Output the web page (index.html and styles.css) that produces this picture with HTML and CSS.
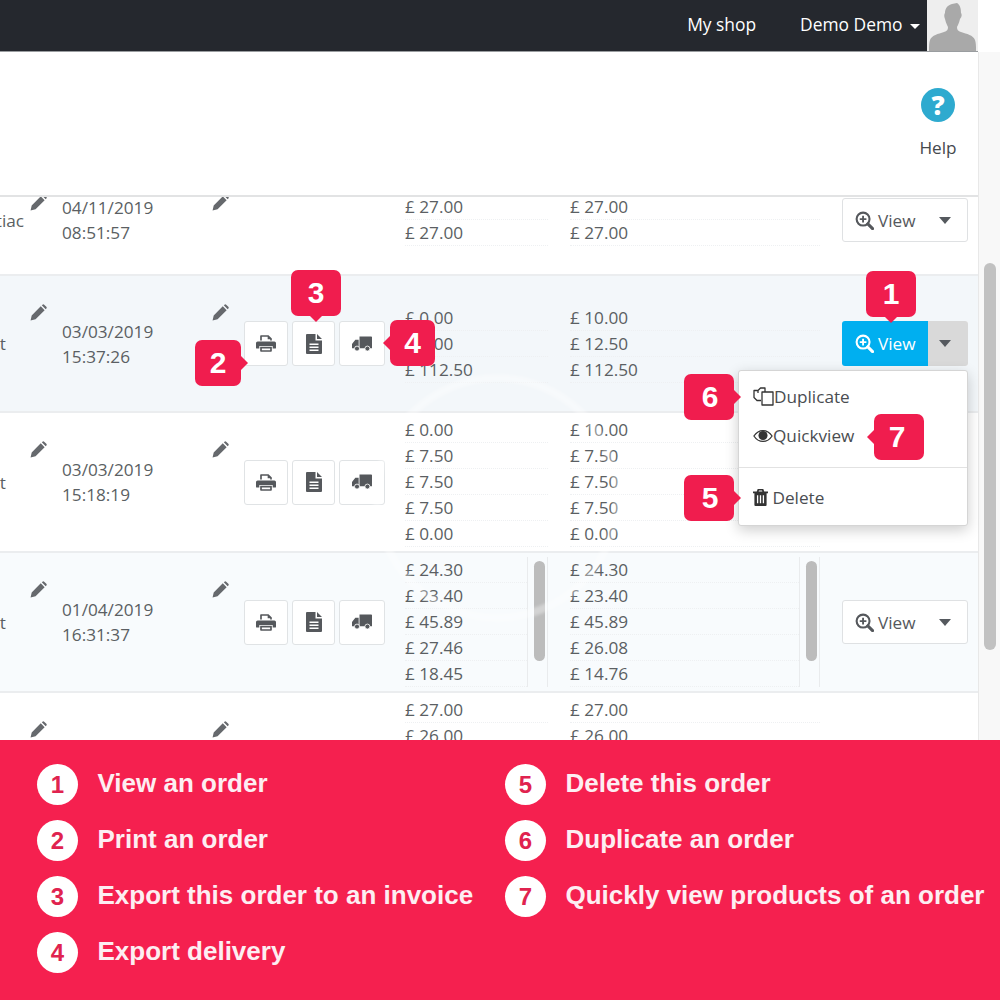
FILE: index.html
```html
<!DOCTYPE html>
<html lang="en">
<head>
    <meta charset="UTF-8">
    <title>Orders</title>
    <link rel="stylesheet" href="styles.css">
</head>
<body>
    <svg class="sprite" xmlns="http://www.w3.org/2000/svg">
        <symbol id="i-pencil" viewBox="0 0 18 18"><path d="M.6 17.4l1.2-5.3 9.6-9.6 4.1 4.1-9.6 9.6zM12.5 1.4l.7-.7a1.3 1.3 0 0 1 1.8 0l2.3 2.3a1.3 1.3 0 0 1 0 1.8l-.7.7z"/></symbol>
        <symbol id="i-print" viewBox="0 0 24 20"><path fill-rule="evenodd" d="M2 7.500h20a2 2 0 0 1 2 2V15a1 1 0 0 1-1 1h-3v-3H4v3H1a1 1 0 0 1-1-1V9.500a2 2 0 0 1 2-2zM5 6.500V1a1 1 0 0 1 1-1h9l4 4v2.500h-2V5h-3V2H7v4.500zM5 14h14v5a1 1 0 0 1-1 1H6a1 1 0 0 1-1-1zM7 16v2h10v-2z"/></symbol>
        <symbol id="i-doc" viewBox="0 0 16 20"><path fill-rule="evenodd" d="M1 0h8.500v6.500H16V19a1 1 0 0 1-1 1H1a1 1 0 0 1-1-1V1a1 1 0 0 1 1-1zM3.500 9.500v1.500h9V9.500zM3.500 12.500V14h9v-1.500zM3.500 15.500V17h9v-1.500zM11 0l5 5h-5z"/></symbol>
        <symbol id="i-truck" viewBox="0 0 24 18"><path d="M9 0h14a1 1 0 0 1 1 1v13H9zM8 4v10H0V9l4-5z"/><circle cx="6" cy="14.500" r="3" stroke="#fff" stroke-width="1"/><circle cx="18.500" cy="14.500" r="3" stroke="#fff" stroke-width="1"/></symbol>
        <symbol id="i-zoom" viewBox="0 0 20 20"><circle cx="8.500" cy="8.500" r="6.800" fill="none" stroke="currentColor" stroke-width="2.200"/><path d="M8.500 5v7M5 8.500h7" stroke="currentColor" stroke-width="2" fill="none"/><path d="M13.500 13.500l5 5" stroke="currentColor" stroke-width="3.200" stroke-linecap="round" fill="none"/></symbol>
        <symbol id="i-copy" viewBox="0 0 21 19"><path d="M5 6V3.500L7.500 1H12v4M5 3.500H1v7l3 3h4M9 5h11v13H9z" fill="none" stroke="currentColor" stroke-width="1.300" stroke-linejoin="round"/></symbol>
        <symbol id="i-eye" viewBox="0 0 22 14"><path d="M1 7c2.500-3.800 6-6 10-6s7.500 2.200 10 6c-2.500 3.800-6 6-10 6S3.500 10.800 1 7z" fill="none" stroke="currentColor" stroke-width="1.400"/><circle cx="11" cy="6.500" r="5" fill="currentColor"/></symbol>
        <symbol id="i-trash" viewBox="0 0 16 18"><path fill-rule="evenodd" d="M5 0h6l1 2.500h4V4.500h-1.500V17a1 1 0 0 1-1 1h-11a1 1 0 0 1-1-1V4.500H0v-2h4zM6 2.500h4L9.600 1.500H6.400zM4.200 6.500v8.500h1.400V6.500zM7.300 6.500v8.500h1.400V6.500zM10.400 6.500v8.500h1.400V6.500z"/></symbol>
    </svg>

    <div class="page">
        <!-- top bar -->
        <header class="topbar">
            <a class="nav-link">My shop</a>
            <a class="nav-link nav-user">Demo Demo <span class="caret caret-white"></span></a>
            <div class="avatar">
                <svg width="51" height="51" viewBox="0 0 51 51"><path fill="#a9a9a9" d="M18 13c0-5 3-8 7-9l5-1c3 2 4 5 4 10 1 1 1 4-1 6-1 4-2 6-3 8 0 3 1 4 4 5 6 2 12 3 14 8 1 3 1 6 1 11H2c0-5 0-8 1-11 2-5 8-6 14-8 3-1 4-2 4-5-1-2-2-4-3-8-1-2-1-5 0-6z"/></svg>
            </div>
        </header>

        <div class="main">
            <div class="content">
                <div class="toolbar">
                    <div class="help">
                        <span class="help-icon">?</span>
                        <span class="help-label">Help</span>
                    </div>
                </div>

                <div class="table">
                    <!-- row 0 -->
                    <div class="row row-first">
                        <div class="cell-name"><span class="name-text name-long">Pontiac</span><svg class="pencil"><use href="#i-pencil"/></svg></div>
                        <div class="cell-date"><div>04/11/2019<br>08:51:57</div><svg class="pencil"><use href="#i-pencil"/></svg></div>
                        <div></div>
                        <div class="prices"><ul class="lines"><li>£ 27.00</li><li>£ 27.00</li></ul></div>
                        <div class="prices"><ul class="lines"><li>£ 27.00</li><li>£ 27.00</li></ul></div>
                        <div class="view-btn"><span class="view-main"><svg class="zoom-icon"><use href="#i-zoom"/></svg>View</span><span class="view-caret"><span class="caret"></span></span></div>
                    </div>

                    <!-- row 1 -->
                    <div class="row row-tint row-open">
                        <div class="cell-name"><span class="name-text">Lambert</span><svg class="pencil"><use href="#i-pencil"/></svg></div>
                        <div class="cell-date"><div>03/03/2019<br>15:37:26</div><svg class="pencil"><use href="#i-pencil"/></svg></div>
                        <div class="actions">
                            <span class="act act-print"><svg class="act-print-icon"><use href="#i-print"/></svg></span>
                            <span class="act act-doc"><svg class="act-doc-icon"><use href="#i-doc"/></svg></span>
                            <span class="act act-truck"><svg class="act-truck-icon"><use href="#i-truck"/></svg></span>
                        </div>
                        <div class="prices"><ul class="lines"><li>£ 0.00</li><li>£ 0.00</li><li>£ 112.50</li></ul></div>
                        <div class="prices"><ul class="lines"><li>£ 10.00</li><li>£ 12.50</li><li>£ 112.50</li></ul></div>
                        <div class="view-btn view-active"><span class="view-main"><svg class="zoom-icon"><use href="#i-zoom"/></svg>View</span><span class="view-caret"><span class="caret"></span></span></div>
                    </div>

                    <!-- row 2 -->
                    <div class="row">
                        <div class="cell-name"><span class="name-text">Lambert</span><svg class="pencil"><use href="#i-pencil"/></svg></div>
                        <div class="cell-date"><div>03/03/2019<br>15:18:19</div><svg class="pencil"><use href="#i-pencil"/></svg></div>
                        <div class="actions">
                            <span class="act act-print"><svg class="act-print-icon"><use href="#i-print"/></svg></span>
                            <span class="act act-doc"><svg class="act-doc-icon"><use href="#i-doc"/></svg></span>
                            <span class="act act-truck"><svg class="act-truck-icon"><use href="#i-truck"/></svg></span>
                        </div>
                        <div class="prices"><ul class="lines"><li>£ 0.00</li><li>£ 7.50</li><li>£ 7.50</li><li>£ 7.50</li><li>£ 0.00</li></ul></div>
                        <div class="prices"><ul class="lines"><li>£ 10.00</li><li>£ 7.50</li><li>£ 7.50</li><li>£ 7.50</li><li>£ 0.00</li></ul></div>
                        <div></div>
                    </div>

                    <!-- row 3 -->
                    <div class="row row-tint-light">
                        <div class="cell-name"><span class="name-text">Lambert</span><svg class="pencil"><use href="#i-pencil"/></svg></div>
                        <div class="cell-date"><div>01/04/2019<br>16:31:37</div><svg class="pencil"><use href="#i-pencil"/></svg></div>
                        <div class="actions">
                            <span class="act act-print"><svg class="act-print-icon"><use href="#i-print"/></svg></span>
                            <span class="act act-doc"><svg class="act-doc-icon"><use href="#i-doc"/></svg></span>
                            <span class="act act-truck"><svg class="act-truck-icon"><use href="#i-truck"/></svg></span>
                        </div>
                        <div class="prices"><ul class="lines"><li>£ 24.30</li><li>£ 23.40</li><li>£ 45.89</li><li>£ 27.46</li><li>£ 18.45</li></ul><div class="track"><span class="thumb"></span></div></div>
                        <div class="prices"><ul class="lines"><li>£ 24.30</li><li>£ 23.40</li><li>£ 45.89</li><li>£ 26.08</li><li>£ 14.76</li></ul><div class="track"><span class="thumb"></span></div></div>
                        <div class="view-btn"><span class="view-main"><svg class="zoom-icon"><use href="#i-zoom"/></svg>View</span><span class="view-caret"><span class="caret"></span></span></div>
                    </div>

                    <!-- row 4, cut off by the legend -->
                    <div class="row row-last">
                        <div class="cell-name"><svg class="pencil"><use href="#i-pencil"/></svg></div>
                        <div class="cell-date"><div></div><svg class="pencil"><use href="#i-pencil"/></svg></div>
                        <div></div>
                        <div class="prices"><ul class="lines"><li>£ 27.00</li><li>£ 26.00</li></ul></div>
                        <div class="prices"><ul class="lines"><li>£ 27.00</li><li>£ 26.00</li></ul></div>
                        <div></div>
                    </div>
                </div>
            </div>
            <div class="gutter"><span class="gutter-thumb"></span></div>
        </div>

        <!-- faint ring over the table -->
        <svg class="ring" width="260" height="260" viewBox="0 0 260 260"><circle cx="130" cy="130" r="120" fill="none" stroke="#fff" stroke-width="8" stroke-opacity=".35"/></svg>

        <!-- dropdown -->
        <div class="menu">
            <div class="menu-item"><svg class="menu-icon-copy"><use href="#i-copy"/></svg>Duplicate</div>
            <div class="menu-item"><svg class="menu-icon-eye"><use href="#i-eye"/></svg>Quickview</div>
            <div class="menu-divider"></div>
            <div class="menu-item menu-item-del"><svg class="menu-icon-trash"><use href="#i-trash"/></svg>&nbsp;Delete</div>
        </div>

        <!-- numbered callouts -->
        <span class="callout down c1">1</span>
        <span class="callout right c2">2</span>
        <span class="callout down c3">3</span>
        <span class="callout left c4">4</span>
        <span class="callout right c5">5</span>
        <span class="callout right c6">6</span>
        <span class="callout left c7">7</span>

        <!-- legend -->
        <footer class="legend">
            <ul class="legend-col legend-col-first">
                <li><span class="dot">1</span><span class="legend-text">View an order</span></li>
                <li><span class="dot">2</span><span class="legend-text">Print an order</span></li>
                <li><span class="dot">3</span><span class="legend-text">Export this order to an invoice</span></li>
                <li><span class="dot">4</span><span class="legend-text">Export delivery</span></li>
            </ul>
            <ul class="legend-col">
                <li><span class="dot">5</span><span class="legend-text">Delete this order</span></li>
                <li><span class="dot">6</span><span class="legend-text">Duplicate an order</span></li>
                <li><span class="dot">7</span><span class="legend-text">Quickly view products of an order</span></li>
            </ul>
        </footer>
    </div>
</body>
</html>
```

FILE: styles.css
```css
*{
    margin: 0;
    padding: 0;
    box-sizing: border-box;
}

ul{
    list-style: none;
}

body{
    font-family: "Open Sans", "Liberation Sans", sans-serif;
    font-size: 17.200px;
    color: #5b5f63;
    background-color: #fff;
}

.sprite{
    display: none;
}

.page{
    position: relative;
    width: 1000px;
    height: 1000px;
    overflow: hidden;
    display: flex;
    flex-direction: column;
}

/* top bar */
.topbar{
    height: 52px;
    flex: none;
    width: 978px;
    padding-bottom: 3px;
    border-bottom: 1px solid #9a9da0;
    background-color: #25282e;
    display: flex;
    justify-content: flex-end;
    align-items: center;
    color: #fff;
    font-size: 17.400px;
}

.nav-user{
    margin-left: 44px;
    margin-right: 7px;
}

.caret{
    display: inline-block;
    width: 0;
    height: 0;
    border-left: 6.500px solid transparent;
    border-right: 6.500px solid transparent;
    border-top: 7px solid #55595e;
}

.caret-white{
    border-left-width: 5.500px;
    border-right-width: 5.500px;
    border-top: 5px solid #fff;
    margin-left: 3px;
    vertical-align: middle;
}

.avatar{
    width: 51px;
    height: 51px;
    background-color: #eee;
    margin-top: 2px;
}

/* main area */
.main{
    flex: 1;
    min-height: 0;
    display: flex;
}

.content{
    width: 978px;
    display: flex;
    flex-direction: column;
}

.gutter{
    width: 22px;
    border-left: 1px solid #e8e8e8;
    background-color: #f8f8f8;
    padding: 211px 4px 0 5px;
}

.gutter-thumb{
    display: block;
    width: 12px;
    height: 387px;
    border-radius: 6px;
    background-color: #c1c1c1;
}

.toolbar{
    height: 143px;
    flex: none;
    display: flex;
    justify-content: flex-end;
    padding: 36px 15px 0 0;
}

.help{
    width: 50px;
    display: flex;
    flex-direction: column;
    align-items: center;
}

.help-icon{
    width: 34px;
    height: 34px;
    border-radius: 50%;
    background-color: #2eaacf;
    color: #fff;
    font-weight: 800;
    font-size: 26px;
    line-height: 34px;
    text-align: center;
}

.help-label{
    margin-top: 14px;
    color: #45494d;
}

/* table */
.table{
    flex: 1;
    min-height: 0;
    overflow: hidden;
    border-top: 2px solid #e2e3e4;
}

.row{
    height: 140px;
    flex: none;
    border-bottom: 2px solid #ebedef;
    display: grid;
    grid-template-columns: 62px 182px 161px 165px 272px 126px;
    align-items: center;
}

.row-first{
    height: 110px;
    margin-top: -31px;
}

.row-tint{
    height: 137px;
    background-color: #f3f7fa;
}

.row-tint-light{
    background-color: #f8fbfd;
}

.row-open .pencil{
    margin-bottom: 62px;
}

.row-first .pencil{
    margin-bottom: 36px;
}

.cell-name{
    width: 47px;
    display: flex;
    justify-content: flex-end;
    align-items: center;
    white-space: nowrap;
}

.name-text{
    margin-right: 24px;
}

.name-long{
    margin-right: 6px;
}

.cell-date{
    display: flex;
    justify-content: space-between;
    align-items: center;
    padding-right: 15px;
    line-height: 25px;
}

.pencil{
    width: 17px;
    height: 17px;
    flex: none;
    fill: #66696d;
    margin-bottom: 66px;
}

.actions{
    display: flex;
    gap: 4px;
}

.act{
    height: 45px;
    width: 44px;
    display: flex;
    justify-content: center;
    align-items: center;
    background-color: #fff;
    border: 1px solid #e0e3e5;
    border-radius: 3px;
    fill: #55585c;
}

.act-doc{
    width: 43px;
}

.act-truck{
    width: 46px;
}

.act-print-icon{
    width: 20px;
    height: 17px;
}

.act-doc-icon{
    width: 16px;
    height: 20px;
}

.act-truck-icon{
    width: 20px;
    height: 16px;
}

.prices{
    display: flex;
    padding-right: 22px;
}

.lines{
    flex: 1;
    min-width: 0;
}

.lines li{
    height: 26px;
    line-height: 26px;
    border-bottom: 1px dotted #eef0f2;
}

.track{
    width: 21px;
    flex: none;
    padding: 4px 4px 0 6px;
    border-left: 1px solid #e9ebed;
    border-right: 1px solid #e9ebed;
}

.thumb{
    display: block;
    width: 11px;
    height: 100px;
    border-radius: 6px;
    background-color: #bcbcbc;
}

.row-last .prices{
    align-self: start;
    padding-top: 4px;
}

/* view button */
.view-btn{
    display: flex;
    height: 44px;
    background-color: #fff;
    border: 1px solid #dfe1e3;
    border-radius: 3px;
    overflow: hidden;
}

.view-main{
    width: 85px;
    display: flex;
    align-items: center;
    padding-left: 12px;
    color: #55585c;
}

.zoom-icon{
    width: 19px;
    height: 19px;
    margin-right: 4px;
}

.view-caret{
    flex: 1;
    display: flex;
    justify-content: center;
    align-items: center;
    padding-right: 6px;
}

.view-active{
    height: 45px;
    border: 0;
}

.view-active .view-main{
    width: 86px;
    padding-left: 13px;
    background-color: #00aff0;
    color: #fff;
}

.view-active .view-caret{
    background-color: #d9d9d9;
}

/* dropdown */
.menu{
    position: absolute;
    left: 738px;
    top: 370px;
    width: 230px;
    height: 156px;
    padding-top: 6px;
    background-color: #fff;
    border: 1px solid #d5d5d5;
    border-radius: 3px;
    box-shadow: 0 4px 14px rgba(0,0,0,.2);
    color: #4a4d51;
}

.menu-item{
    display: flex;
    align-items: center;
    height: 39px;
    padding-left: 14px;
}

.menu-item-del{
    height: 37px;
}

.menu-divider{
    margin-top: 12px;
    margin-bottom: 11px;
    border-top: 1px solid #e2e2e2;
}

.menu-icon-copy{
    width: 21px;
    height: 19px;
    color: #333;
}

.menu-icon-eye{
    width: 20px;
    height: 14px;
    color: #333;
}

.menu-icon-trash{
    width: 15px;
    height: 17px;
    fill: #333;
}

/* ring over the table */
.ring{
    position: absolute;
    left: 367px;
    top: 368px;
    filter: blur(1.500px);
    pointer-events: none;
}

/* callouts */
.callout{
    position: absolute;
    width: 50px;
    height: 46px;
    display: flex;
    justify-content: center;
    align-items: center;
    background-color: #f01d4e;
    border-radius: 7px;
    color: #fff;
    font-family: "Liberation Sans", sans-serif;
    font-weight: bold;
    font-size: 30px;
}

.callout::after{
    content: "";
    position: absolute;
    width: 0;
    height: 0;
    border: 7px solid transparent;
}

.callout.down::after{
    left: 18px;
    top: 45px;
    border-top-color: #f01d4e;
}

.callout.right::after{
    left: 100%;
    top: 16px;
    border-left-color: #f01d4e;
}

.callout.left::after{
    right: 100%;
    top: 16px;
    border-right-color: #f01d4e;
}

.c1{ left: 866px; top: 271px; }
.c2{ left: 195px; top: 340px; width: 46px; }
.c3{ left: 291px; top: 270px; }
.c4{ left: 390px; top: 320px; width: 45px; }
.c5{ left: 684px; top: 475px; padding-left: 2px; }
.c6{ left: 684px; top: 374px; padding-left: 2px; }
.c7{ left: 874px; top: 414px; padding-right: 4px; }

/* legend */
.legend{
    height: 260px;
    flex: none;
    position: relative;
    background-color: #f5204f;
    display: flex;
    padding: 24px 0 0 37px;
    color: #fdeef2;
    font-family: "Liberation Sans", sans-serif;
    font-weight: bold;
    font-size: 26px;
}

.legend-col{
    display: flex;
    flex-direction: column;
    gap: 15px;
}

.legend-col-first{
    width: 468px;
}

.legend-col li{
    height: 41px;
    display: flex;
    align-items: center;
    gap: 19.500px;
    white-space: nowrap;
}

.legend-text{
    margin-bottom: 2px;
}

.dot{
    width: 41px;
    height: 41px;
    flex: none;
    border-radius: 50%;
    background-color: #fff;
    color: #e0234f;
    font-size: 24px;
    line-height: 41px;
    text-align: center;
}
```
